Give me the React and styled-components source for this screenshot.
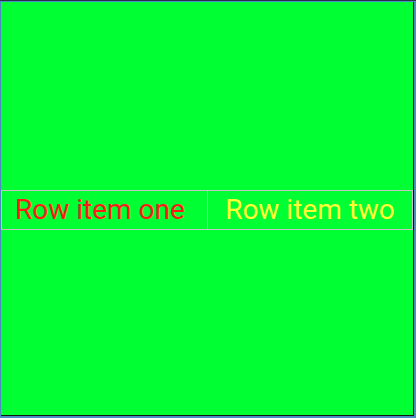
import React from 'react'
import styled, {createGlobalStyle} from 'styled-components'

const GlobalStyle = createGlobalStyle`
    html, body {
        margin: 0;
        padding: 0;
        background: #4a8cbf;
    }
    body {
        font-family: Roboto, "Noto Sans", sans-serif;
    }
`

const Frame = styled.div`
    width: 416px;
    height: 418px;
    box-sizing: border-box;
    border-top: 1px solid #2b2d4a;
    padding: 1px 2px 2px 1px;
`

const Stage = styled.div`
    height: 100%;
    box-sizing: border-box;
    background: #00ff33;
    border-right: 1px solid #111111;
    border-bottom: 1px solid #111111;
    padding-top: 2px;
    display: flex;
    flex-direction: column;
    justify-content: center;
`

const Row = styled.div`
    display: flex;
    border: 1px solid #c4c4c4;
    height: 40px;
    box-sizing: border-box;
`

const Cell = styled.div`
    flex: 0 0 50%;
    box-sizing: border-box;
    display: flex;
    align-items: center;
    justify-content: center;
    padding-right: ${p => p.$shift || 0}px;
    color: ${p => p.color};
    font-size: 28px;
    white-space: nowrap;
    & + & {
        border-left: 1px solid #c4c4c4;
    }
`

function App() {
    return (
        <>
            <GlobalStyle />
            <Frame>
                <Stage>
                    <Row>
                        <Cell color="#ff1a1a" $shift={9}>Row item one</Cell>
                        <Cell color="#ffff33">Row item two</Cell>
                    </Row>
                </Stage>
            </Frame>
        </>
    )
}

export default App
